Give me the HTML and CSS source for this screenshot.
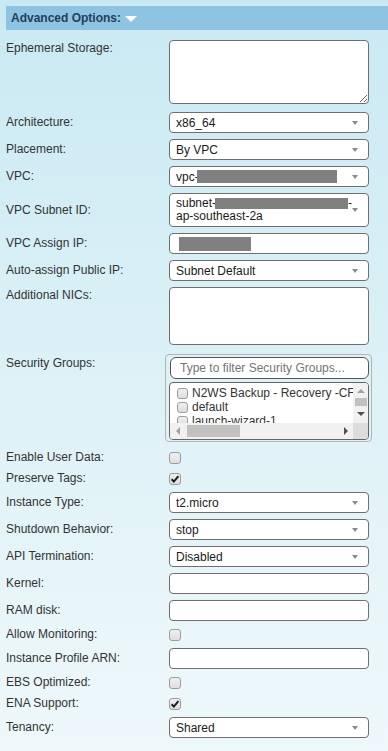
FILE: index.html
```html
<!DOCTYPE html>
<html>
<head>
<meta charset="utf-8">
<title>Advanced Options</title>
<link rel="stylesheet" href="styles.css">
</head>
<body>
<div class="panel">
  <div class="header">Advanced Options: <svg class="caret" width="12" height="6" viewBox="0 0 12 6"><path d="M0 0H12L6 6Z" fill="#ffffff"/></svg></div>
  <div class="form">
    <div class="row top ephemeral">
      <label>Ephemeral Storage:</label>
      <textarea class="ctl ta"></textarea>
    </div>
    <div class="row">
      <label>Architecture:</label>
      <div class="ctl sel"><span class="val">x86_64</span><span class="arrow"></span></div>
    </div>
    <div class="row">
      <label>Placement:</label>
      <div class="ctl sel"><span class="val">By VPC</span><span class="arrow"></span></div>
    </div>
    <div class="row">
      <label>VPC:</label>
      <div class="ctl sel"><span class="val">vpc-<span class="redact vpc-r"></span></span><span class="arrow"></span></div>
    </div>
    <div class="row">
      <label>VPC Subnet ID:</label>
      <div class="ctl sel multi"><span class="val"><span class="line">subnet-<span class="redact subnet-r"></span>-</span><span class="line">ap-southeast-2a</span></span><span class="arrow"></span></div>
    </div>
    <div class="row">
      <label>VPC Assign IP:</label>
      <div class="ctl inp"><span class="redact ip-r"></span></div>
    </div>
    <div class="row">
      <label>Auto-assign Public IP:</label>
      <div class="ctl sel"><span class="val">Subnet Default</span><span class="arrow"></span></div>
    </div>
    <div class="row top">
      <label>Additional NICs:</label>
      <div class="ctl box nics"></div>
    </div>
    <div class="row top sgrow">
      <label>Security Groups:</label>
      <div class="sg">
        <div class="filter">Type to filter Security Groups...</div>
        <div class="list">
          <div class="items">
            <div class="item"><span class="cb small"></span><span>N2WS Backup - Recovery -CF-Stack</span></div>
            <div class="item"><span class="cb small"></span><span>default</span></div>
            <div class="item"><span class="cb small"></span><span>launch-wizard-1</span></div>
          </div>
          <div class="vbar">
            <div class="btn"><span class="tri up light"></span></div>
            <div class="vthumb"></div>
            <div class="btn"><span class="tri down dark"></span></div>
          </div>
          <div class="hbar">
            <div class="btn"><span class="tri left light"></span></div>
            <div class="hthumb"></div>
            <div class="hspace"></div>
            <div class="btn"><span class="tri right dark"></span></div>
          </div>
          <div class="corner"></div>
        </div>
      </div>
    </div>
    <div class="row chk">
      <label>Enable User Data:</label>
      <div><span class="cb"></span></div>
    </div>
    <div class="row chk">
      <label>Preserve Tags:</label>
      <div><span class="cb"><svg width="10" height="10" viewBox="0 0 10 10"><path d="M1.6 5.2 L3.9 7.6 L8.4 2.2" fill="none" stroke="#1c1c1c" stroke-width="2"/></svg></span></div>
    </div>
    <div class="row">
      <label>Instance Type:</label>
      <div class="ctl sel"><span class="val">t2.micro</span><span class="arrow"></span></div>
    </div>
    <div class="row">
      <label>Shutdown Behavior:</label>
      <div class="ctl sel"><span class="val">stop</span><span class="arrow"></span></div>
    </div>
    <div class="row">
      <label>API Termination:</label>
      <div class="ctl sel"><span class="val">Disabled</span><span class="arrow"></span></div>
    </div>
    <div class="row">
      <label>Kernel:</label>
      <div class="ctl inp"></div>
    </div>
    <div class="row">
      <label>RAM disk:</label>
      <div class="ctl inp"></div>
    </div>
    <div class="row chk">
      <label>Allow Monitoring:</label>
      <div><span class="cb"></span></div>
    </div>
    <div class="row">
      <label>Instance Profile ARN:</label>
      <div class="ctl inp"></div>
    </div>
    <div class="row chk">
      <label>EBS Optimized:</label>
      <div><span class="cb"></span></div>
    </div>
    <div class="row chk">
      <label>ENA Support:</label>
      <div><span class="cb"><svg width="10" height="10" viewBox="0 0 10 10"><path d="M1.6 5.2 L3.9 7.6 L8.4 2.2" fill="none" stroke="#1c1c1c" stroke-width="2"/></svg></span></div>
    </div>
    <div class="row">
      <label>Tenancy:</label>
      <div class="ctl sel"><span class="val">Shared</span><span class="arrow"></span></div>
    </div>
  </div>
</div>
</body>
</html>
```

FILE: styles.css
```css
* { box-sizing: border-box; }
html, body {
  margin: 0;
  padding: 0;
  height: 100%;
}
body {
  background: linear-gradient(to bottom, #c9e9f2 0%, #ddf1f7 50%, #eef8fb 100%);
  font-family: "Liberation Sans", Arial, sans-serif;
  font-size: 12px;
  color: #333;
}
.panel {
  padding: 6px 0 0 6px;
}
.header {
  height: 24px;
  line-height: 24px;
  background: #8fc3e2;
  color: #22405e;
  font-weight: bold;
  font-size: 12px;
  padding-left: 5px;
  margin-bottom: 7px;
  display: flex;
  align-items: center;
  gap: 4px;
}
.caret { display: block; margin-top: 1px; }

.row {
  display: grid;
  grid-template-columns: 163px 200px;
  align-items: center;
  padding: 3px 0;
}
.row label {
  line-height: 15px;
  color: #333;
}
.row.top { align-items: start; }
.row.top label { margin-top: 1px; }
.ephemeral { padding-bottom: 5px; }
.ephemeral label { margin-top: 0; }
.sgrow { padding-top: 6px; padding-bottom: 5px; }
.row.sgrow label { margin-top: 2px; }

.ctl {
  width: 200px;
  height: 21px;
  border: 1px solid #6f6f6f;
  border-radius: 4px;
  background: #fff;
}
.ta {
  display: block;
  height: 64px;
  margin: 0;
  padding: 2px;
  resize: both;
  font: inherit;
  outline: none;
}
.nics { height: 58px; }
.sel {
  display: flex;
  align-items: center;
  justify-content: space-between;
  padding: 0 10px 0 6px;
  color: #1a1a1a;
  white-space: nowrap;
}
.sel .val { display: flex; align-items: center; }
.sel.multi {
  height: 34px;
  align-items: center;
}
.sel.multi .val { flex-direction: column; align-items: flex-start; }
.sel .line { display: flex; align-items: center; line-height: 13px; }
.arrow {
  width: 0;
  height: 0;
  border-left: 3.5px solid transparent;
  border-right: 3.5px solid transparent;
  border-top: 4px solid #8a8a8a;
  flex: none;
}
.inp {
  display: flex;
  align-items: center;
  padding-left: 9px;
}
.redact {
  display: inline-block;
  background: #808080;
}
.vpc-r { width: 140px; height: 13px; margin-left: -2px; }
.subnet-r { width: 133px; height: 11px; margin-left: -1px; }
.ip-r { width: 72px; height: 14px; }

/* security groups */
.sg {
  margin-left: -4px;
  width: 207px;
  height: 88px;
  border: 1px solid #b4b4b4;
  border-radius: 4px;
  padding: 2px 0 0 3px;
}
.filter {
  margin-left: 1px;
  width: 199px;
  height: 22px;
  border: 1px solid #555;
  border-radius: 6px;
  background: #fff;
  color: #757575;
  line-height: 20px;
  padding-left: 9px;
  margin-bottom: 3px;
  white-space: nowrap;
}
.list {
  width: 200px;
  height: 58px;
  border: 1px solid #666;
  border-radius: 4px;
  background: #fff;
  overflow: hidden;
  display: grid;
  grid-template-columns: 1fr 15px;
  grid-template-rows: 1fr 16px;
}
.items {
  overflow: hidden;
  padding: 3px 0 0 7px;
  white-space: nowrap;
  color: #333;
}
.item {
  display: flex;
  align-items: center;
  gap: 4px;
  height: 14px;
}
.vbar {
  background: #f1f1f1;
  display: flex;
  flex-direction: column;
  align-items: center;
}
.vbar .btn { width: 15px; height: 15px; display: flex; align-items: center; justify-content: center; }
.vthumb { width: 12px; height: 8px; background: #c1c1c1; }
.hbar {
  background: #f1f1f1;
  display: flex;
  align-items: center;
}
.hbar .btn { width: 15px; height: 16px; display: flex; align-items: center; justify-content: center; flex: none; }
.hthumb { width: 53px; height: 12px; background: #c1c1c1; margin-left: 2px; }
.hspace { flex: 1; }
.corner { background: #dcdcdc; }
.tri { width: 0; height: 0; display: block; }
.tri.up { border-left: 4px solid transparent; border-right: 4px solid transparent; border-bottom: 4px solid #a3a3a3; }
.tri.down { border-left: 4px solid transparent; border-right: 4px solid transparent; border-top: 4px solid #505050; }
.tri.left { border-top: 4px solid transparent; border-bottom: 4px solid transparent; border-right: 4px solid #a3a3a3; }
.tri.right { border-top: 4px solid transparent; border-bottom: 4px solid transparent; border-left: 4px solid #505050; }

/* checkboxes */
.cb {
  display: inline-flex;
  align-items: center;
  justify-content: center;
  width: 12px;
  height: 12px;
  border: 1px solid #9c9c9c;
  border-radius: 3px;
  background: linear-gradient(to bottom, #efefef, #dedede);
  vertical-align: middle;
  flex: none;
}
.cb.small { width: 11px; height: 11px; }
.row.chk > div { display: flex; align-items: center; }
```
